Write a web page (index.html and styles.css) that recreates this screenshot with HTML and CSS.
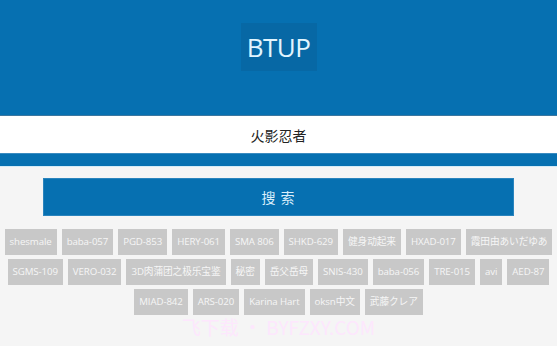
FILE: index.html
```html
<!DOCTYPE html>
<html lang="zh-CN">
<head>
<meta charset="utf-8">
<title>BTUP</title>
<link rel="stylesheet" href="styles.css">
</head>
<body>
<header class="header">
  <div class="logo">BTUP</div>
</header>
<form class="search">
  <div class="search-field">
    <input class="search-input" type="text" value="火影忍者">
  </div>
  <div class="search-strip"></div>
  <div class="search-action">
    <button class="search-btn" type="button">搜 索</button>
  </div>
</form>
<ul class="tags">
  <li class="tag">shesmale</li>
  <li class="tag">baba-057</li>
  <li class="tag">PGD-853</li>
  <li class="tag">HERY-061</li>
  <li class="tag">SMA 806</li>
  <li class="tag">SHKD-629</li>
  <li class="tag">健身动起来</li>
  <li class="tag">HXAD-017</li>
  <li class="tag">霞田由あいだゆあ</li>
  <li class="tag">SGMS-109</li>
  <li class="tag">VERO-032</li>
  <li class="tag">3D肉蒲团之极乐宝鉴</li>
  <li class="tag">秘密</li>
  <li class="tag">岳父岳母</li>
  <li class="tag">SNIS-430</li>
  <li class="tag">baba-056</li>
  <li class="tag">TRE-015</li>
  <li class="tag">avi</li>
  <li class="tag">AED-87</li>
  <li class="tag">MIAD-842</li>
  <li class="tag">ARS-020</li>
  <li class="tag">Karina Hart</li>
  <li class="tag">oksn中文</li>
  <li class="tag">武藤クレア</li>
</ul>
<div class="watermark">飞下载 • BYFZXY.COM</div>
</body>
</html>
```
FILE: styles.css
```css
* { box-sizing: border-box; }
html, body { margin: 0; padding: 0; }
body {
  background: #f5f5f5;
  font-family: "Open Sans", "Noto Sans CJK SC", sans-serif;
  overflow: hidden;
}
.header {
  height: 116px;
  background: #0670b1;
  border-bottom: 1px solid #3b77a0;
  padding-top: 23px;
  display: flex;
  justify-content: center;
  align-items: flex-start;
}
.logo {
  width: 76px;
  height: 48px;
  background: #0768a5;
  color: #e2f5ff;
  font-size: 26px;
  line-height: 48px;
  text-align: center;
  letter-spacing: -0.5px;
}
.search { margin: 0; }
.search-field { background: #fff; height: 37px; }
.search-input {
  display: block;
  width: 100%;
  height: 37px;
  border: 0;
  outline: none;
  background: transparent;
  text-align: center;
  font-family: "Noto Sans CJK SC", sans-serif;
  font-size: 14px;
  color: #222;
  padding: 0;
}
.search-strip {
  height: 14px;
  background: #0670b1;
  border-top: 1px solid #3a8bc0;
  border-bottom: 1px solid #d3ebf7;
}
.search-action { padding: 11px 43px 0; }
.search-btn {
  display: block;
  width: 100%;
  height: 38px;
  background: #0670b1;
  border: 1px solid #2a84bd;
  color: #d9eefb;
  font-family: "Noto Sans CJK SC", sans-serif;
  font-size: 14px;
  letter-spacing: 1px;
  padding: 0;
}
.tags {
  list-style: none;
  margin: 13px 0 0;
  padding: 0 2px;
  display: flex;
  flex-wrap: wrap;
  justify-content: center;
  gap: 4px 5px;
}
.tag {
  height: 26px;
  line-height: 26px;
  padding: 0 5px;
  background: #c8c8c8;
  color: #f6f6f6;
  font-size: 9.7px;
  letter-spacing: -0.1px;
}
.watermark {
  text-align: center;
  color: #fde7fd;
  font-family: "Noto Sans CJK SC", sans-serif;
  font-size: 19px;
  line-height: 22px;
  margin-top: 1px;
}
```
